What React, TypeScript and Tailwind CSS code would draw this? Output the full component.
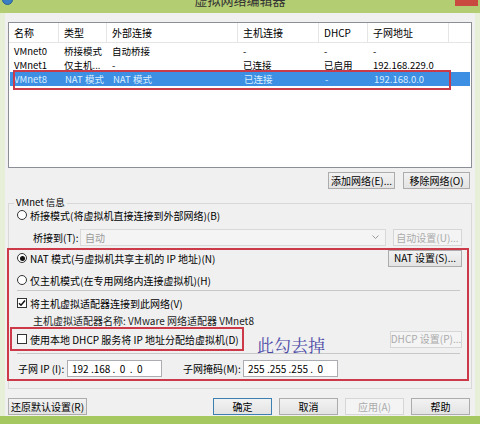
import React from "react";

const FONT = { fontFamily: '"Noto Sans CJK SC", "Liberation Sans", sans-serif' };

const COLS = [
  { label: "名称", w: "w-[50px]" },
  { label: "类型", w: "w-[48px]" },
  { label: "外部连接", w: "w-[131px]" },
  { label: "主机连接", w: "w-[81px]" },
  { label: "DHCP", w: "w-[49px]" },
  { label: "子网地址", w: "w-[81px]" },
];

const ROWS = [
  ["VMnet0", "桥接模式", "自动桥接", "-", "-", "-"],
  ["VMnet1", "仅主机...", "-", "已连接", "已启用", "192.168.229.0"],
  ["VMnet8", "NAT 模式", "NAT 模式", "已连接", "-", "192.168.0.0"],
];

function Btn({
  children,
  w,
  disabled,
  primary,
}: {
  children: React.ReactNode;
  w: string;
  disabled?: boolean;
  primary?: boolean;
}) {
  return (
    <div
      className={`${w} h-[17px] flex items-center justify-center text-[10px] leading-none whitespace-nowrap border ${
        disabled
          ? "border-[#d6d6d6] bg-[#f4f4f4] text-[#ababab]"
          : primary
          ? "border-[#3c7fb1] bg-gradient-to-b from-[#f2f2f2] to-[#e3e3e3] text-black"
          : "border-[#acacac] bg-gradient-to-b from-[#f2f2f2] to-[#e3e3e3] text-black"
      }`}
    >
      {children}
    </div>
  );
}

function Radio({ checked }: { checked?: boolean }) {
  return (
    <div className="w-[10px] h-[10px] rounded-full border border-[#333] bg-white flex items-center justify-center shrink-0">
      {checked && <div className="w-[5px] h-[5px] rounded-full bg-[#111]" />}
    </div>
  );
}

function Check({ checked }: { checked?: boolean }) {
  return (
    <div className="w-[10px] h-[10px] border border-[#333] bg-white flex items-center justify-center shrink-0">
      {checked && (
        <svg width="8" height="8" viewBox="0 0 8 8">
          <path d="M1 4.2 L3 6.2 L7 1.5" fill="none" stroke="#111" strokeWidth="1.5" />
        </svg>
      )}
    </div>
  );
}

export default function App() {
  return (
    <div className="w-[480px] h-[424px] overflow-hidden bg-[#b3cd72] flex flex-col text-black whitespace-nowrap" style={FONT}>
      {/* title bar */}
      <div className="h-[13px] relative shrink-0 overflow-hidden">
        <div className="absolute left-[2px] -top-[6px] w-[11px] h-[11px] rounded-full bg-[#3a7fc4] border border-[#2a5f90]" />
        <div className="absolute left-0 right-0 -top-[8px] text-center text-[13px] leading-[16px] text-[#333]">
          虚拟网络编辑器
        </div>
        <div className="absolute left-[455px] top-0 w-[23px] h-[6px] bg-[#c94a3e]" />
      </div>

      {/* body */}
      <div className="h-[403px] shrink-0 bg-[#e8efd9] px-[5px]">
        <div className="h-full bg-[#f0f0f0] pl-[3px] pt-[9px]">
          {/* list */}
          <div className="relative w-[464px] h-[146px] bg-white border border-[#8c9096]">
            <div className="flex h-[20px] border-b border-[#e5e5e5] text-[10px]">
              {COLS.map((c) => (
                <div key={c.label} className={`${c.w} flex items-center pl-[5px] border-r border-[#e5e5e5]`}>
                  {c.label}
                </div>
              ))}
            </div>
            <div className="pt-[1px] text-[9.5px]">
              {ROWS.map((r, i) => (
                <div
                  key={r[0]}
                  className={`flex h-[14px] items-center ${i === 2 ? "bg-[#3d8fe3] text-[#dcefff] mx-[1px]" : ""}`}
                >
                  {r.map((v, j) => (
                    <div key={j} className={`${COLS[j].w} ${i === 2 && j === 0 ? "pl-[4px]" : "pl-[5px]"} overflow-hidden`}>
                      {v}
                    </div>
                  ))}
                </div>
              ))}
            </div>
            <div className="absolute left-[4px] top-[47px] w-[438px] h-[20px] border-2 border-[#c93a4a]" />
          </div>

          {/* add/remove */}
          <div className="w-[464px] flex justify-end gap-[8px] pr-[2px] mt-[4px]">
            <Btn w="w-[67px]">添加网络(E)...</Btn>
            <Btn w="w-[67px]">移除网络(O)</Btn>
          </div>

          {/* group */}
          <div className="relative mt-[14px] w-[464px] h-[186px] border border-[#d8d8d8]">
            <div className="absolute -top-[7px] left-[5px] bg-[#f0f0f0] px-[2px] text-[9.5px] leading-[10px]">VMnet 信息</div>
            <div className="pt-[3px] text-[10px]">
              <div className="flex items-center h-[16px] pl-[8px] gap-[3px]">
                <Radio />
                <span>桥接模式(将虚拟机直接连接到外部网络)(B)</span>
              </div>
              <div className="flex items-center h-[17px] mt-[6px]">
                <span className="pl-[24px] w-[71px]">桥接到(T):</span>
                <div className="w-[306px] h-[17px] border border-[#d9d9d9] bg-[#f4f4f4] flex items-center pl-[4px] text-[#9a9a9a] relative">
                  自动
                  <svg className="absolute right-[6px] top-[5px]" width="7" height="5" viewBox="0 0 7 5">
                    <path d="M0.5 0.5 L3.5 3.5 L6.5 0.5" fill="none" stroke="#9a9a9a" />
                  </svg>
                </div>
                <div className="ml-[7px]">
                  <Btn w="w-[69px]" disabled>
                    自动设置(U)...
                  </Btn>
                </div>
              </div>

              {/* red annotated section */}
              <div className="-ml-[2px] mt-[2px] w-[462px] h-[133px] border-2 border-[#cc3a4a]">
                <div className="flex items-center h-[18px] pl-[8px] pr-[5px] -mt-[1px]">
                  <Radio checked />
                  <span className="ml-[3px] flex-1">NAT 模式(与虚拟机共享主机的 IP 地址)(N)</span>
                  <Btn w="w-[74px]">NAT 设置(S)...</Btn>
                </div>
                <div className="flex items-center h-[16px] pl-[8px] gap-[3px] mt-[5px]">
                  <Radio />
                  <span>仅主机模式(在专用网络内连接虚拟机)(H)</span>
                </div>
                <div className="ml-[8px] mr-[7px] h-px bg-[#c8c8c8] mt-[2px]" />
                <div className="flex items-center h-[16px] pl-[8px] gap-[3px] mt-[4px]">
                  <Check checked />
                  <span>将主机虚拟适配器连接到此网络(V)</span>
                </div>
                <div className="h-[13px] flex items-center pl-[24px] mt-[3px] text-[#222]">
                  主机虚拟适配器名称: VMware 网络适配器 VMnet8
                </div>
                <div className="flex items-center h-[24px] pr-[5px]">
                  <div className="w-[234px] h-[24px] ml-[1px] border-2 border-[#cc3a4a] flex items-center pl-[5px] gap-[3px]">
                    <Check />
                    <span>使用本地 DHCP 服务将 IP 地址分配给虚拟机(D)</span>
                  </div>
                  <span
                    className="ml-[13px] mt-[10px] text-[17px] leading-none text-[#4a4aa6]"
                    style={{ fontFamily: '"Noto Serif CJK SC", "Noto Sans CJK SC", serif' }}
                  >
                    此勾去掉
                  </span>
                  <div className="ml-auto">
                    <Btn w="w-[72px]" disabled>
                      DHCP 设置(P)...
                    </Btn>
                  </div>
                </div>
                <div className="ml-[8px] mr-[7px] h-px bg-[#c8c8c8] mt-[2px]" />
                <div className="flex items-center h-[17px] mt-[6px] pl-[9px]">
                  <span className="w-[49px]">子网 IP (I):</span>
                  <div className="w-[95px] h-[17px] bg-white border border-[#abadb3] flex items-center pl-[4px] whitespace-pre">
                    {"192 .168 .  0  .  0"}
                  </div>
                  <span className="ml-[21px] w-[60px]">子网掩码(M):</span>
                  <div className="w-[95px] h-[17px] bg-white border border-[#abadb3] flex items-center pl-[4px] whitespace-pre">
                    {"255 .255 .255 .  0"}
                  </div>
                </div>
              </div>
            </div>
          </div>

          {/* bottom buttons */}
          <div className="w-[464px] flex items-center mt-[9px]">
            <Btn w="w-[79px]">还原默认设置(R)</Btn>
            <div className="ml-auto flex gap-[7px] pr-[2px]">
              <Btn w="w-[59px]" primary>
                确定
              </Btn>
              <Btn w="w-[59px]">取消</Btn>
              <Btn w="w-[59px]" disabled>
                应用(A)
              </Btn>
              <Btn w="w-[59px]">帮助</Btn>
            </div>
          </div>
        </div>
      </div>
      <div className="flex-1 bg-[#a6c860]" />
    </div>
  );
}
